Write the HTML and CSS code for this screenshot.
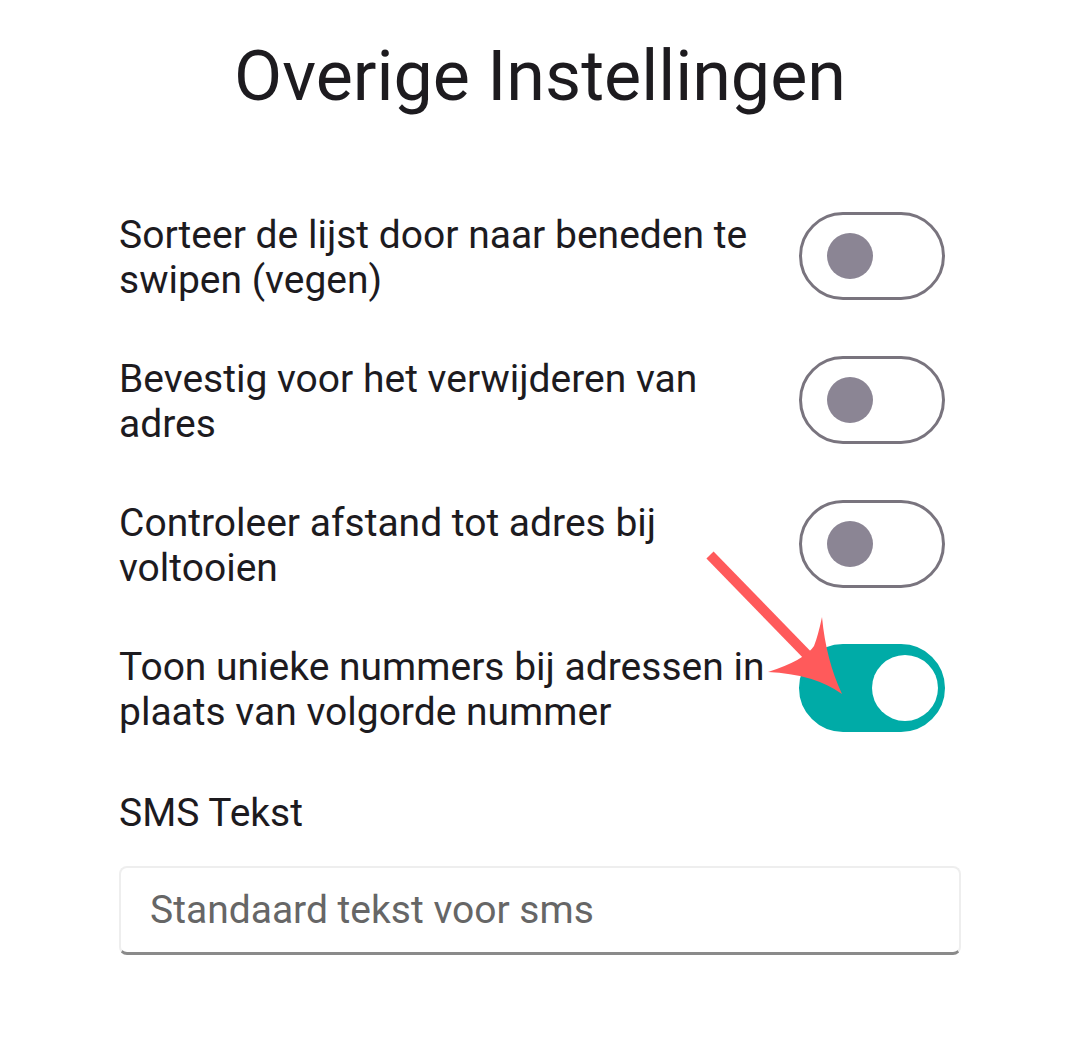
FILE: index.html
```
<!DOCTYPE html>
<html lang="nl">
<head>
  <meta charset="UTF-8">
  <meta name="viewport" content="width=device-width, initial-scale=1.0">
  <title>Overige Instellingen</title>
  <link rel="stylesheet" href="styles.css">
</head>
<body>
  <div class="page">
    <h1 class="title">Overige Instellingen</h1>

    <div class="settings">
      <div class="setting-row">
        <span class="setting-label">Sorteer de lijst door naar beneden te swipen (vegen)</span>
        <div class="toggle"><span class="knob"></span></div>
      </div>
      <div class="setting-row">
        <span class="setting-label">Bevestig voor het verwijderen van adres</span>
        <div class="toggle"><span class="knob"></span></div>
      </div>
      <div class="setting-row">
        <span class="setting-label">Controleer afstand tot adres bij voltooien</span>
        <div class="toggle"><span class="knob"></span></div>
      </div>
      <div class="setting-row">
        <span class="setting-label">Toon unieke nummers bij adressen in plaats van volgorde nummer</span>
        <div class="toggle on"><span class="knob"></span></div>
      </div>
    </div>

    <div class="sms">
      <label class="sms-label" for="sms-text">SMS Tekst</label>
      <input class="sms-input" id="sms-text" type="text" placeholder="Standaard tekst voor sms">
    </div>

    <svg class="arrow" width="1080" height="1042" viewBox="0 0 1080 1042">
      <line x1="710" y1="555" x2="815" y2="663" stroke="#ff5a5b" stroke-width="10" />
      <path d="M 842 694 Q 814 674 768 672 Q 805 660 814 646 Q 818 636 822 617 Q 826 660 842 694 Z" fill="#ff5a5b" />
    </svg>
  </div>
</body>
</html>
```

FILE: styles.css
```
body {
  margin: 0;
  padding: 0;
  background-color: #fff;
  font-family: Roboto, 'Liberation Sans', sans-serif;
  color: #1d1b1f;
}

.page {
  position: relative;
  width: 1080px;
  height: 1042px;
  padding: 0 119px;
  box-sizing: border-box;
  overflow: hidden;
}

.title {
  margin: 0;
  padding-top: 34px;
  font-size: 70px;
  font-weight: 400;
  line-height: 84px;
  text-align: center;
  color: #1d1b1f;
}

.settings {
  display: flex;
  flex-direction: column;
  gap: 50px;
  margin-top: 91px;
  padding-right: 16px;
}

.setting-row {
  display: flex;
  align-items: center;
  justify-content: space-between;
  gap: 16px;
}

.setting-label {
  flex: 1;
  padding-top: 4px;
  font-size: 39px;
  line-height: 45px;
}

.toggle {
  position: relative;
  flex-shrink: 0;
  width: 146px;
  height: 88px;
  border: 3px solid #79747e;
  border-radius: 44px;
  box-sizing: border-box;
  background-color: #fff;
}

.toggle .knob {
  position: absolute;
  left: 25px;
  top: 18px;
  width: 46px;
  height: 46px;
  border-radius: 50%;
  background-color: #8b8594;
}

.toggle.on {
  border-color: #00aba7;
  background-color: #00aba7;
}

.toggle.on .knob {
  left: 70px;
  top: 8px;
  width: 66px;
  height: 66px;
  background-color: #fff;
}

.sms {
  display: flex;
  flex-direction: column;
  margin-top: 56px;
}

.sms-label {
  font-size: 39px;
  line-height: 45px;
}

.sms-input {
  margin-top: 30px;
  height: 89px;
  padding: 0 29px;
  font-family: Roboto, 'Liberation Sans', sans-serif;
  font-size: 39px;
  color: #1d1b1f;
  border: 2px solid #eeeeee;
  border-bottom: 3px solid #8a8a8a;
  border-radius: 8px;
  box-sizing: border-box;
  outline: none;
}

.sms-input::placeholder {
  color: #666;
}

.arrow {
  position: absolute;
  left: 0;
  top: 0;
  pointer-events: none;
}
```
